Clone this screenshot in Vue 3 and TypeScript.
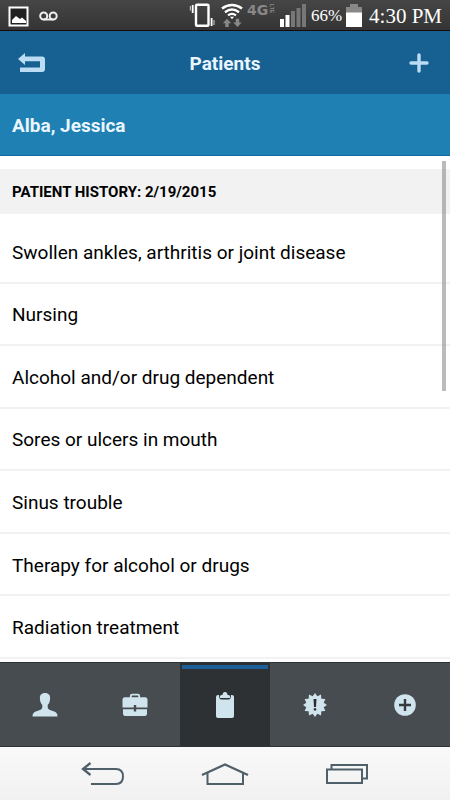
<script setup lang="ts">
import { ref } from 'vue'

type TabId = 'person' | 'briefcase' | 'clipboard' | 'alert' | 'add'

interface Tab {
  id: TabId
  label: string
}

const conditions: string[] = [
  'Swollen ankles, arthritis or joint disease',
  'Nursing',
  'Alcohol and/or drug dependent',
  'Sores or ulcers in mouth',
  'Sinus trouble',
  'Therapy for alcohol or drugs',
  'Radiation treatment',
]

const tabs: Tab[] = [
  { id: 'person', label: 'Profile' },
  { id: 'briefcase', label: 'Cases' },
  { id: 'clipboard', label: 'History' },
  { id: 'alert', label: 'Alerts' },
  { id: 'add', label: 'Add' },
]

const activeTab = ref<TabId>('clipboard')

// Twelve-pointed star behind the alert mark
const burst: string = Array.from({ length: 24 }, (_, i) => {
  const r = i % 2 === 0 ? 12 : 9
  const a = (i * Math.PI) / 12
  return `${(12 + r * Math.sin(a)).toFixed(2)},${(12 - r * Math.cos(a)).toFixed(2)}`
}).join(' ')
</script>

<template>
  <div class="screen">
    <div class="status">
      <div class="status-group notices">
        <svg width="22" height="22" viewBox="0 0 22 22" aria-hidden="true">
          <rect x="1.5" y="2.5" width="18" height="18" fill="#222" stroke="#fff" stroke-width="2" />
          <path d="M4 18V15L8 11L12 14L14 12.5L18 16V18Z" fill="#fff" />
        </svg>
        <svg width="19" height="10" viewBox="0 0 19 10" fill="none" stroke="#eee" stroke-width="2" aria-hidden="true">
          <circle cx="4.7" cy="5" r="3.5" />
          <circle cx="14.2" cy="5" r="3.5" />
          <path d="M4.7 8.5H14.2" />
        </svg>
      </div>
      <div class="status-group signals">
        <svg width="27" height="26" viewBox="0 0 27 26" fill="none" aria-hidden="true">
          <rect x="8" y="1.8" width="12.5" height="21" rx="1" stroke="#fff" stroke-width="2.4" />
          <path d="M4.7 2V10M23.6 15V23" stroke="#fff" stroke-width="1.8" />
          <path d="M2.4 3V7.5M26 17V22" stroke="#bbb" stroke-width="1.2" />
        </svg>
        <svg width="24" height="26" viewBox="0 0 24 26" fill="none" aria-hidden="true">
          <path d="M3 5.5Q13 -1.5 23 5.5" stroke="#fff" stroke-width="2.6" />
          <path d="M6 9.2Q13 3.7 20 9.2" stroke="#fff" stroke-width="2.4" />
          <path d="M9 12.4Q13 9.2 17 12.4" stroke="#fff" stroke-width="2.2" />
          <path d="M11 13.7H15L13 16.2Z" fill="#fff" />
          <path d="M8 15.7L12.2 20.2H9.7V24H6.3V20.2H3.8ZM18.5 24L14.3 19.5H16.8V15.7H20.2V19.5H22.7Z" fill="#888" />
        </svg>
        <svg width="29" height="26" viewBox="0 0 29 26" fill="#888" aria-hidden="true">
          <text class="net" x="0" y="12">4G</text>
          <text class="lte" transform="translate(23 1) rotate(90)">LTE</text>
        </svg>
        <svg width="27" height="26" viewBox="0 0 27 26" aria-hidden="true">
          <path d="M0 16H4V24H0ZM5.5 12H9.5V24H5.5Z" fill="#fff" />
          <path d="M11 8H15V24H11ZM16.5 5H20.5V24H16.5ZM22 1H26V24H22Z" fill="#777" />
        </svg>
        <span class="percent">66%</span>
        <svg width="16" height="26" viewBox="0 0 16 26" aria-hidden="true">
          <path d="M4 1H12V4H16V10H0V4H4Z" fill="#888" />
          <path d="M0 9.5H16V24H0Z" fill="#fff" />
        </svg>
        <span class="clock">4:30 PM</span>
      </div>
    </div>

    <header class="titlebar">
      <button class="bar-button" type="button" aria-label="Back">
        <svg width="28" height="20" viewBox="0 0 28 20" aria-hidden="true">
          <path d="M0 6L7 0V3.6H24Q27 3.6 27 6.6V16Q27 19 24 19H2V14.6H22V8.2H7V12Z" fill="#bcdcf4" />
        </svg>
      </button>
      <h1>Patients</h1>
      <button class="bar-button end" type="button" aria-label="Add patient">
        <svg width="20" height="20" viewBox="0 0 20 20" aria-hidden="true">
          <path d="M10 2V18M2 10H18" stroke="#bcdcf4" stroke-width="3.4" stroke-linecap="round" />
        </svg>
      </button>
    </header>

    <h2 class="patient">Alba, Jessica</h2>

    <main class="content">
      <h3>PATIENT HISTORY: 2/19/2015</h3>
      <ul>
        <li v-for="condition in conditions" :key="condition">{{ condition }}</li>
      </ul>
      <span class="scroll-thumb"></span>
    </main>

    <nav class="tabs">
      <button
        v-for="tab in tabs"
        :key="tab.id"
        type="button"
        class="tab"
        :class="{ active: tab.id === activeTab }"
        :aria-label="tab.label"
        @click="activeTab = tab.id"
      >
        <svg v-if="tab.id === 'person'" width="26" height="26" viewBox="0 0 26 26" aria-hidden="true">
          <path d="M13 1C9.3 1 7.7 3.3 7.9 6.5C8 9.2 8.8 11.5 10.3 13V15.4C10.3 17 7.5 18.2 4.5 19.2C1.5 20.2 .5 21.5 .5 24.5H25.5C25.5 21.5 24.5 20.2 21.5 19.2C18.5 18.2 15.7 17 15.7 15.4V13C17.2 11.5 18 9.2 18.1 6.5C18.3 3.3 16.7 1 13 1Z" fill="#d0e4ee" />
        </svg>
        <svg v-else-if="tab.id === 'briefcase'" width="26" height="26" viewBox="0 0 26 26" aria-hidden="true">
          <path d="M8.8 6V4Q8.8 2.7 10.1 2.7H15.9Q17.2 2.7 17.2 4V6" fill="none" stroke="#d0e4ee" stroke-width="1.8" />
          <path d="M3 5.2H23Q25.5 5.2 25.5 8V15.6H14.2V13H11.8V15.6H.5V8Q.5 5.2 3 5.2ZM1 17.2H11.8V19.5H14.2V17.2H25V21.5Q25 24 22.5 24H3.5Q1 24 1 21.5Z" fill="#d0e4ee" />
        </svg>
        <svg v-else-if="tab.id === 'clipboard'" width="26" height="28" viewBox="0 0 26 28" aria-hidden="true">
          <path d="M6 4H7Q7 8.5 9.5 8.5H16.5Q19 8.5 19 4H20Q22 4 22 6V25Q22 27 20 27H6Q4 27 4 25V6Q4 4 6 4Z" fill="#d0e4ee" />
          <path d="M8 7V5.3Q8 4.2 9.5 4H10.5Q10.7 1 13 1Q15.3 1 15.5 4H16.5Q18 4.2 18 5.3V7Z" fill="#d0e4ee" />
        </svg>
        <svg v-else-if="tab.id === 'alert'" width="24" height="24" viewBox="0 0 24 24" aria-hidden="true">
          <polygon :points="burst" fill="#d0e4ee" />
          <path d="M10.5 6H13.5L13 14H11ZM10.8 15.3H13.2V17.5H10.8Z" fill="#292d2f" />
        </svg>
        <svg v-else width="24" height="24" viewBox="0 0 24 24" aria-hidden="true">
          <circle cx="12" cy="12" r="10.8" fill="#d0e4ee" />
          <path d="M12 6V18M6 12H18" stroke="#353a3d" stroke-width="2.4" />
        </svg>
      </button>
    </nav>

    <div class="system">
      <button type="button" aria-label="System back">
        <svg width="44" height="24" viewBox="0 0 44 24" fill="none" stroke="#4f606b" stroke-width="2" aria-hidden="true">
          <path d="M2 7H35Q42 7 42 14.5Q42 22 35 22H10" />
          <path d="M9.5 1L2 7L9.5 13" stroke-width="2.3" />
        </svg>
      </button>
      <button type="button" aria-label="Home">
        <svg width="48" height="24" viewBox="0 0 48 24" fill="none" stroke="#4f606b" stroke-width="2.3" aria-hidden="true">
          <path d="M1 13L24 2.5L47 13" />
          <path d="M6.5 11V22H42V11" stroke-width="2" />
        </svg>
      </button>
      <button type="button" aria-label="Recent apps">
        <svg width="44" height="22" viewBox="0 0 44 22" fill="none" stroke="#4f606b" stroke-width="2" aria-hidden="true">
          <path d="M6.5 6V2H42V15.5H37" />
          <rect x="2" y="6.5" width="35" height="13.5" />
        </svg>
      </button>
    </div>
  </div>
</template>

<style>
body {
  margin: 0;
}
</style>

<style scoped>
.screen {
  display: flex;
  flex-direction: column;
  min-height: 100vh;
  background: #fff;
  color: #000;
  font-family: Roboto, "Liberation Sans", sans-serif;
}

button {
  display: flex;
  align-items: center;
  justify-content: center;
  margin: 0;
  padding: 0;
  border: 0;
  background: none;
  cursor: pointer;
}

svg {
  display: block;
  flex: none;
  overflow: visible;
}

.status {
  display: flex;
  justify-content: space-between;
  align-items: center;
  box-sizing: border-box;
  height: 31px;
  padding: 2px 8px 0;
  border-bottom: 1px solid #180c0b;
  background: linear-gradient(#464646, #343434);
}

.status-group {
  display: flex;
  align-items: center;
}

.notices {
  gap: 9px;
}

.signals {
  gap: 4px;
  color: #fff;
  font-family: "Liberation Serif", serif;
}

.net {
  font: bold 14px "DejaVu Sans", sans-serif;
}

.lte {
  font: bold 5px "Liberation Sans", sans-serif;
}

.percent {
  font-size: 17px;
}

.clock {
  padding-left: 3px;
  font-size: 21px;
  line-height: 28px;
}

.titlebar {
  display: grid;
  grid-template-columns: 1fr auto 1fr;
  align-items: center;
  min-height: 63px;
  background: #176092;
}

h1,
h2,
h3 {
  margin: 0;
  font-weight: 700;
}

h1 {
  padding-top: 2px;
  color: #e9f6ff;
  font-size: 19px;
  line-height: 24px;
}

.bar-button {
  justify-self: start;
  padding: 12px 18px;
}

.bar-button.end {
  justify-self: end;
  padding: 12px 21px;
}

.patient {
  padding: 20px 12px 18px;
  border-bottom: 1px solid #136b9f;
  background: #1f80b3;
  color: #e9f6ff;
  font-size: 19px;
  line-height: 23px;
}

.content {
  position: relative;
  display: flex;
  flex: 1;
  flex-direction: column;
  padding: 13px 0 3px;
}

h3 {
  padding: 13px 12px 11px;
  background: #f2f2f2;
  font-size: 15px;
  line-height: 21px;
}

ul {
  display: grid;
  flex: 1;
  grid-auto-rows: 1fr;
  margin: 0;
  padding: 7px 0 0;
  list-style: none;
}

li {
  display: flex;
  align-items: center;
  padding: 3px 12px 0;
  border-bottom: 2px solid #f2f2f2;
  font-size: 19px;
  line-height: 24px;
}

.scroll-thumb {
  position: absolute;
  top: 5px;
  right: 4px;
  width: 4px;
  height: 230px;
  background: rgba(120, 120, 120, 0.5);
}

.tabs {
  display: grid;
  grid-template-columns: repeat(5, 1fr);
  border-top: 1px solid #2d3436;
  border-bottom: 1px solid #2d3436;
  background: #464c4f;
}

.tab {
  height: 83px;
}

.tab.active {
  background: linear-gradient(#1d5f98, #1d5f98) 50% 2px / calc(100% - 4px) 4px no-repeat #2e3133;
}

.system {
  display: flex;
  align-items: center;
  justify-content: center;
  gap: 76px;
  height: 53px;
  background: linear-gradient(#f9f9f9, #f1f1f1);
}
</style>
